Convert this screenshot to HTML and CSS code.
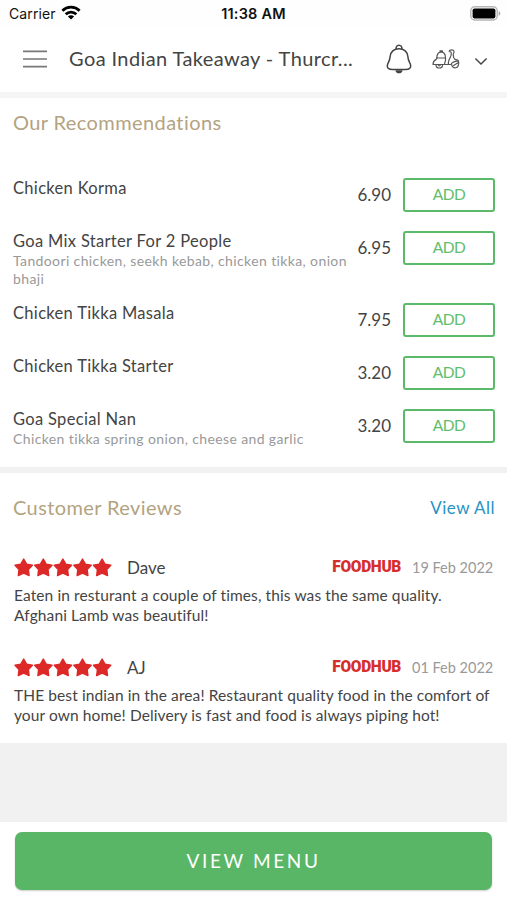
FILE: index.html
```html
<!DOCTYPE html>
<html lang="en">
<head>
<meta charset="utf-8">
<title>Goa Indian Takeaway</title>
<link rel="stylesheet" href="styles.css">
</head>
<body>
<svg class="defs" width="0" height="0">
  <symbol id="stars" viewBox="0 0 98 19">
    <path id="star" d="M9.7 1.1 12.6 6.2 18.4 7.3 14.4 11.6 15.1 17.6 9.7 15.1 4.3 17.6 5 11.6 1 7.3 6.8 6.2Z"/>
    <use href="#star" x="19.6"/><use href="#star" x="39.2"/><use href="#star" x="58.8"/><use href="#star" x="78.4"/>
  </symbol>
</svg>
<div class="status">
  <span class="carrier">Carrier</span>
  <svg class="wifi" width="20" height="16" viewBox="0 0 20 16"><g fill="none" stroke="#000" stroke-width="2.8"><path d="M1.4 5.7A12.3 12.3 0 0 1 18.6 5.7"/><path d="M4.7 9.2A7.6 7.6 0 0 1 15.3 9.2"/></g><path d="M10 14.6 6.9 11.5A4.4 4.4 0 0 1 13.1 11.5Z"/></svg>
  <span class="time">11:38 AM</span>
  <svg class="battery" width="31" height="15" viewBox="0 0 31 15"><rect x=".8" y=".8" width="26.4" height="13.2" rx="4" fill="#fff" stroke="#b5b5b5" stroke-width="1.4"/><rect x="2.6" y="2.4" width="22.8" height="10" rx="1.8"/><path d="M28.7 5v5q1.6-.7 1.6-2.5T28.7 5Z" fill="#aaa"/></svg>
</div>
<header class="header">
  <svg class="burger" width="24" height="18" viewBox="0 0 24 18"><path d="M0 1.4H24M0 9H24M0 16.6H24" stroke="#777" stroke-width="1.6"/></svg>
  <h1 class="title">Goa Indian Takeaway - Thurcr...</h1>
  <svg class="bell" width="26" height="30" viewBox="0 0 26 30"><g fill="none" stroke="#444" stroke-width="1.5" stroke-linejoin="round"><path d="M10.2 5.1V3.2Q10.8 1.2 13 1.2T15.8 3.2V5.1"/><path d="M13 4.7C8.1 4.7 4.3 7.8 4.1 12.8C3.9 17.4 1.3 19.1 1.3 22C1.3 24.6 3.5 25.4 6.2 25.4H19.8C22.5 25.4 24.7 24.6 24.7 22C24.7 19.1 22.1 17.4 21.9 12.8C21.7 7.8 17.9 4.7 13 4.7Z"/></g><path d="M9.4 26.2H16.6Q16.2 29.3 13 29.3T9.4 26.2Z" fill="#444"/></svg>
  <svg class="scooter" width="28" height="21" viewBox="0 0 28 21"><g fill="none" stroke="#555" stroke-width="1.2" stroke-linejoin="round" stroke-linecap="round"><path d="M4.8 9Q5 3.2 9.2 3.2T13.5 9ZM8 3.2V1.9H10.4V3.2"/><path d="M4.9 9 4.1 10.4Q1.1 12 1 15.5H19Q19.6 12.6 26.4 11.8M13.5 9V11.4L12.4 15.4"/><path d="M17.2 2.2Q17.6.8 19.4.8Q22.2.8 22 3.2Q21.6 4.6 21.2 5.4L21.6 8.4Q22.2 10.6 25 10.8Q26.6 11.2 26.8 14.2M17.2 2.2 19.2 3.2Q19.6 6 18.4 8L16.8 11.6Q16 13.8 16.6 15.4"/><path d="M4 15.7A3.3 3.3 0 0 0 10.6 15.7M6 15.7Q7.3 18 8.6 15.7"/><path d="M19.7 15.6A3.4 3.4 0 1 0 26.4 14.6M21.6 16.4 26.4 13.6"/></g></svg>
  <svg class="chevron" width="14" height="9" viewBox="0 0 14 9"><path d="M1.4 1.5 7 7.1 12.6 1.5" fill="none" stroke="#444" stroke-width="1.4"/></svg>
</header>
<main>
  <section class="recommendations">
    <h2 class="heading rec-heading">Our Recommendations</h2>
    <div class="item"><div class="info"><div class="name">Chicken Korma</div></div><span class="price">6.90</span><button class="add">ADD</button></div>
    <div class="item"><div class="info"><div class="name">Goa Mix Starter For 2 People</div><div class="desc">Tandoori chicken, seekh kebab, chicken tikka, onion<br>bhaji</div></div><span class="price">6.95</span><button class="add">ADD</button></div>
    <div class="item"><div class="info"><div class="name">Chicken Tikka Masala</div></div><span class="price">7.95</span><button class="add">ADD</button></div>
    <div class="item"><div class="info"><div class="name">Chicken Tikka Starter</div></div><span class="price">3.20</span><button class="add">ADD</button></div>
    <div class="item"><div class="info"><div class="name">Goa Special Nan</div><div class="desc">Chicken tikka spring onion, cheese and garlic</div></div><span class="price">3.20</span><button class="add">ADD</button></div>
  </section>
  <section class="reviews">
    <div class="reviews-head"><h2 class="heading">Customer Reviews</h2><a class="all">View All</a></div>
    <article class="review">
      <div class="meta"><svg class="stars" width="98" height="19"><use href="#stars"/></svg><span class="who">Dave</span><span class="brand">FOODHUB</span><span class="date">19 Feb 2022</span></div>
      <p class="body">Eaten in resturant a couple of times, this was the same quality.<br>Afghani Lamb was beautiful!</p>
    </article>
    <article class="review">
      <div class="meta"><svg class="stars" width="98" height="19"><use href="#stars"/></svg><span class="who">AJ</span><span class="brand">FOODHUB</span><span class="date">01 Feb 2022</span></div>
      <p class="body">THE best indian in the area! Restaurant quality food in the comfort of<br>your own home! Delivery is fast and food is always piping hot!</p>
    </article>
  </section>
</main>
<footer class="footer"><button class="menu">VIEW MENU</button></footer>
</body>
</html>
```

FILE: styles.css
```css
* { box-sizing: border-box; }
body { margin: 0; width: 507px; height: 900px; overflow: hidden; display: flex; flex-direction: column; background: #f1f1f1; color: #444; font-family: Lato, "Liberation Sans", sans-serif; }
h1, h2, p { margin: 0; font-weight: 400; }
button { font-family: inherit; padding: 0; }
.defs { display: none; }
.status { height: 26px; flex: none; background: #fefefe; display: grid; grid-template-columns: auto auto 1fr auto; align-items: center; padding: 1px 6px 0 9px; position: relative; color: #111; font-family: Inter, sans-serif; font-size: 14px; }
.wifi { margin-left: 5px; margin-top: -2px; }
.carrier { letter-spacing: .1px; }
.time { font-weight: 600; font-size: 14.5px; letter-spacing: .2px; position: absolute; left: 0; right: 0; top: 5px; line-height: 18px; text-align: center; }
.battery { grid-column: 4; }
.header { height: 66px; flex: none; background: #fff; display: flex; align-items: center; padding: 0 19px 0 23px; }
.burger { flex: none; }
.title { font-size: 20px; line-height: 26px; width: 294px; flex: none; margin: -2px 0 0 22px; white-space: nowrap; letter-spacing: .4px; }
.bell { flex: none; margin-left: 23px; margin-top: -1px; }
.scooter { flex: none; margin-left: 20px; }
.chevron { flex: none; margin-left: 14px; margin-top: 4px; }
.recommendations { background: #fff; border-top: 6px solid #f5f5f5; height: 375px; padding: 11px 12px 0 13px; }
.heading { color: #b3a381; font-size: 20px; line-height: 28px; letter-spacing: .4px; }
.rec-heading { margin-top: -1px; margin-bottom: 42px; }
.item { display: flex; min-height: 53px; padding-bottom: 15px; }
.info { flex: 1; white-space: nowrap; }
.name { font-size: 16.5px; line-height: 21px; letter-spacing: .32px; }
.desc { color: #999; font-size: 14px; line-height: 18px; letter-spacing: .38px; }
.price { font-size: 17px; line-height: 34px; margin-right: 12px; }
.add { width: 92px; height: 34px; border: 2px solid #5aba69; border-radius: 3px; background: #fff; color: #5fbd6c; font-size: 15.5px; letter-spacing: -.5px; padding-bottom: 3px; }
.reviews { background: #fff; border-top: 6px solid #f1f1f1; height: 276px; padding: 20px 13px 0 14px; }
.reviews-head { display: flex; justify-content: space-between; margin-left: -1px; }
.all { color: #2893c5; font-size: 17px; line-height: 30px; letter-spacing: .5px; margin-right: -1px; height: 29px; }
.review { margin-top: 32px; height: 68px; }
.meta { display: flex; align-items: center; height: 26px; }
.stars { fill: #dc2928; stroke: #dc2928; stroke-width: 1.4; stroke-linejoin: round; }
.who { font-size: 17px; margin-left: 15px; }
.brand { margin-left: auto; color: #d62d2d; font: 900 15.5px Roboto, sans-serif; letter-spacing: -.35px; transform: scaleY(1.1); }
.date { width: 81px; margin: 0 1px 0 11px; color: #999; font-size: 14.5px; text-align: right; white-space: nowrap; }
.body { font-size: 15.5px; line-height: 20px; margin-top: 5px; white-space: nowrap; letter-spacing: .1px; }
.footer { margin-top: auto; height: 78px; flex: none; background: #fff; padding: 10px 15px; }
.menu { width: 477px; height: 58px; border: 0; border-radius: 7px; background: #59b666; color: #fff; font-size: 19px; letter-spacing: 2.6px; padding-bottom: 2px; box-shadow: 0 1px 2px #0003; }
```
